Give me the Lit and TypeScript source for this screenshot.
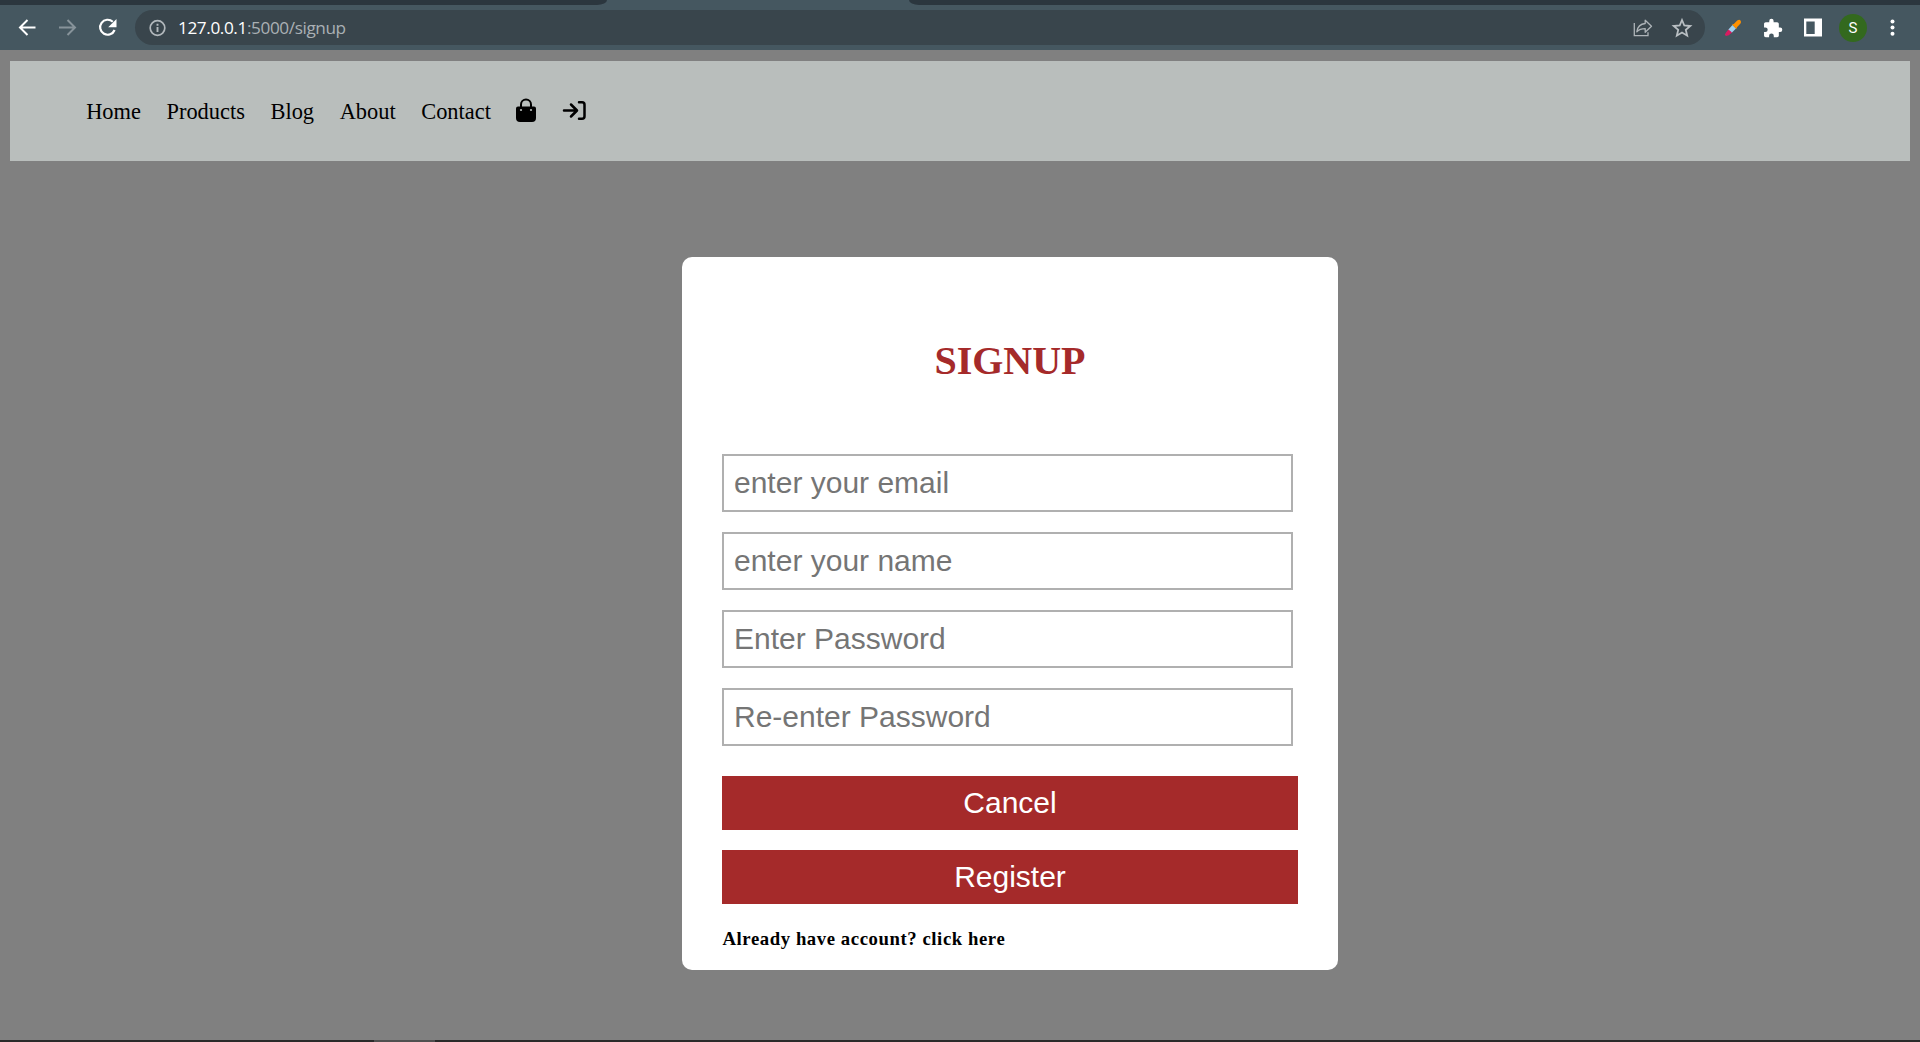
import { LitElement, html, css } from "lit";
import { customElement } from "lit/decorators.js";

@customElement("browser-bar")
class BrowserBar extends LitElement {
  static styles = css`
    :host { display: block; height: 50px; background: #455760; }
    .tabs { display: flex; justify-content: space-between; height: 5px; }
    .tab-left { width: 607px; background: #2b363e; border-bottom-right-radius: 12px 6px; }
    .tab-right { width: 1011px; background: #2b363e; border-bottom-left-radius: 12px 6px; }
    .bar { display: flex; align-items: center; height: 45px; }
    .icon { display: block; flex: none; }
    .back { margin-left: 15px; }
    .forward { margin-left: 16px; }
    .reload { margin-left: 16px; }
    .url {
      display: flex; align-items: center; box-sizing: border-box;
      width: 1570px; height: 35px; margin-left: 15px; padding: 0 11px 0 14px;
      border-radius: 18px; background: #39454c;
    }
    .address {
      flex: 1; margin-left: 11px; color: #aab0b4;
      font: 17.2px/24px "Open Sans", "Noto Sans", sans-serif;
      letter-spacing: -0.4px;
    }
    .host { color: #fff; }
    .star { margin-left: 17px; }
    .picker { margin-left: 19px; }
    .puzzle { margin-left: 21px; }
    .panel { margin-left: 20px; }
    .avatar {
      display: flex; align-items: center; justify-content: center;
      width: 28px; height: 28px; margin-left: 16px; border-radius: 50%;
      background: #33691e; color: #fff; font: 15px/28px Roboto, sans-serif;
    }
    .dots { margin-left: 14px; }
  `;
  render() {
    return html`
      <div class="tabs"><div class="tab-left"></div><div class="tab-right"></div></div>
      <div class="bar">
        <svg class="icon back" width="24" height="24" viewBox="0 0 24 24" fill="none" stroke="#fff" stroke-width="2"><path d="M20.5 11.5H5.5M12.5 4l-7.500 7.500 7.500 7.500"/></svg>
        <svg class="icon forward" width="24" height="24" viewBox="0 0 24 24" fill="none" stroke="#87939a" stroke-width="2"><path d="M4 11.500H19.500M12.500 4l7.500 7.500-7.500 7.500"/></svg>
        <svg class="icon reload" width="25" height="24" viewBox="0 0 25 24"><path d="M17.800 5.800A7.500 7.500 0 1 0 19.600 14" fill="none" stroke="#fff" stroke-width="2.200"/><path d="M21.500 3v8.200h-8.300z" fill="#fff"/></svg>
        <div class="url">
          <svg class="icon" width="18" height="18" viewBox="0 0 18 18" fill="none" stroke="#b2b8bc" stroke-width="1.700"><circle cx="8.500" cy="9" r="7.300"/><path d="M8.500 8v5M8.500 4.800v1.900" stroke-width="1.900"/></svg>
          <span class="address"><span class="host">127.0.0.1</span>:5000/signup</span>
          <svg class="icon" width="20" height="20" viewBox="0 0 20 20" fill="none" stroke="#aeb4b8" stroke-width="1.300"><path d="M1.300 5v12.700h13.700v-3.500"/><path d="M3.800 13.800c.8-5.300 3.600-8 8.400-8.300V2.200l6.300 6-6.300 6V10.700c-3.600 0-6.400 1-8.400 3.100z" stroke-linejoin="round"/></svg>
          <svg class="icon star" width="24" height="22" viewBox="0 0 24 22" fill="none" stroke="#b9bfc3" stroke-width="1.800"><path d="M12 3l2.300 5.500 6 .5-4.500 3.900 1.400 5.800L12 15.600l-5.200 3.100 1.400-5.800L3.700 9l6-.5z"/></svg>
        </div>
        <svg class="icon picker" width="18" height="18" viewBox="0 0 18 18"><path d="M8.500 6l3.500 3.500-4.500 4.500-3.300-3.300z" fill="#9fd0ee"/><path d="M4.500 10.500L2 13.500l-1.200 2.300 1.200 1.300 2.800-.8 3.200-2.800z" fill="#d81b60"/><path d="M8 5.500l1.800-.5 3.400-3.500q2.200-1.300 3.300-.1t0 3.200L13 8.200l-.6 1.800z" fill="#ff9100"/></svg>
        <svg class="icon puzzle" width="20" height="20" viewBox="0.800 0 23 23" fill="#fff"><path d="M20.500 11H19V7c0-1.100-.9-2-2-2h-4V3.500a2.500 2.500 0 0 0-5 0V5H4c-1.100 0-2 .9-2 2v3.800h1.500a2.700 2.700 0 0 1 0 5.400H2V20c0 1.100.9 2 2 2h3.800v-1.500a2.700 2.700 0 0 1 5.400 0V22H17c1.100 0 2-.9 2-2v-4h1.500a2.500 2.500 0 0 0 0-5z"/></svg>
        <svg class="icon panel" width="20" height="20" viewBox="0 0 20 20"><path d="M1 .5h18v18H1z" fill="#fff"/><path d="M3.300 3.500h8.400v12.500H3.300z" fill="#455760"/></svg>
        <div class="avatar">S</div>
        <svg class="icon dots" width="24" height="20" viewBox="0 0 24 20" fill="#fff"><circle cx="11.500" cy="3.500" r="2"/><circle cx="11.500" cy="9.500" r="2"/><circle cx="11.500" cy="15.800" r="2"/></svg>
      </div>
    `;
  }
}

@customElement("site-nav")
class SiteNav extends LitElement {
  static styles = css`
    :host { display: block; margin: 11px 10px 0; height: 100px; background: #b9bebc; }
    .links {
      display: flex; align-items: center; gap: 25.6px; height: 100px; padding-left: 76.200px;
      color: #000; font: 22.4px/26px "Liberation Serif", "Times New Roman", serif;
    }
    .link { padding-top: 2px; }
    .bag, .login { display: block; flex: none; }
    .bag { width: 22px; height: 26px; margin-left: -1px; }
    .login { width: 24px; height: 24px; margin-left: -1.500px; }
  `;
  render() {
    return html`
      <nav class="links">
        ${["Home", "Products", "Blog", "About", "Contact"].map((t) => html`<span class="link">${t}</span>`)}
        <svg class="bag" viewBox="0 0 22 26"><path d="M6 12V6.500a5 5 0 0 1 10 0V12" fill="none" stroke="#000" stroke-width="2"/><path d="M3 8.500h16a2 2 0 0 1 2 2V20q0 4-4 4h-12Q1 24 1 20v-9.500a2 2 0 0 1 2-2z"/><circle cx="6" cy="12" r="1.100" fill="#b9bebc"/><circle cx="16" cy="12" r="1.100" fill="#b9bebc"/></svg>
        <svg class="login" viewBox="0 0 24 24" fill="none" stroke="#000" stroke-width="2.500" stroke-linecap="round" stroke-linejoin="round"><path d="M2 11.500h12.500M9 5.500l6 6-6 6M17 3.300h3q2.500 0 2.500 2.500v11.500q0 2.500-2.500 2.500h-3"/></svg>
      </nav>
    `;
  }
}

@customElement("signup-form")
class SignupForm extends LitElement {
  static styles = css`
    :host { display: block; }
    .card {
      display: flex; flex-direction: column; box-sizing: border-box;
      width: 656px; height: 713px; padding: 81px 40px 0; border-radius: 10px; background: #fff;
    }
    .title {
      margin: 0 0 70px; text-align: center; color: #a52a2a;
      font: bold 40px/46px "Liberation Serif", "Times New Roman", serif;
    }
    .fields { display: flex; flex-direction: column; gap: 20px; }
    .field {
      box-sizing: border-box; width: 571px; height: 58px; padding: 10px; margin: 0;
      border: 2px solid #b0b0b0; border-radius: 0; background: #fff; outline: none;
      font: 30px/34px "Liberation Sans", Arial, sans-serif;
    }
    .field::placeholder { color: #757575; opacity: 1; }
    .actions { display: flex; flex-direction: column; gap: 20px; margin-top: 30px; }
    .action {
      height: 54px; padding: 10px; border: 0; background: #a52a2a; color: #fff;
      font: 30px/34px "Liberation Sans", Arial, sans-serif;
    }
    .hint {
      margin: 24px 0 0; padding-left: 0.500px; color: #000; letter-spacing: 0.58px;
      font: bold 18.72px/22px "Liberation Serif", "Times New Roman", serif;
    }
  `;
  render() {
    return html`
      <form class="card">
        <h1 class="title">SIGNUP</h1>
        <div class="fields">
          <input class="field" type="email" placeholder="enter your email" />
          <input class="field" type="text" placeholder="enter your name" />
          <input class="field" type="password" placeholder="Enter Password" />
          <input class="field" type="password" placeholder="Re-enter Password" />
        </div>
        <div class="actions">
          <button class="action" type="button">Cancel</button>
          <button class="action" type="button">Register</button>
        </div>
        <p class="hint">Already have account? click here</p>
      </form>
    `;
  }
}

@customElement("app-root")
class AppRoot extends LitElement {
  static styles = css`
    :host {
      display: flex; flex-direction: column; width: 1920px; height: 1042px;
      overflow: hidden; background: #808080;
    }
    .content { flex: 1; padding: 96px 0 0 682px; }
    .taskbar { display: flex; height: 2px; padding-left: 374px; background: #2a2a2a; }
    .active { width: 61px; background: #505050; }
  `;
  render() {
    return html`
      <browser-bar></browser-bar>
      <site-nav></site-nav>
      <main class="content"><signup-form></signup-form></main>
      <div class="taskbar"><div class="active"></div></div>
    `;
  }
}
